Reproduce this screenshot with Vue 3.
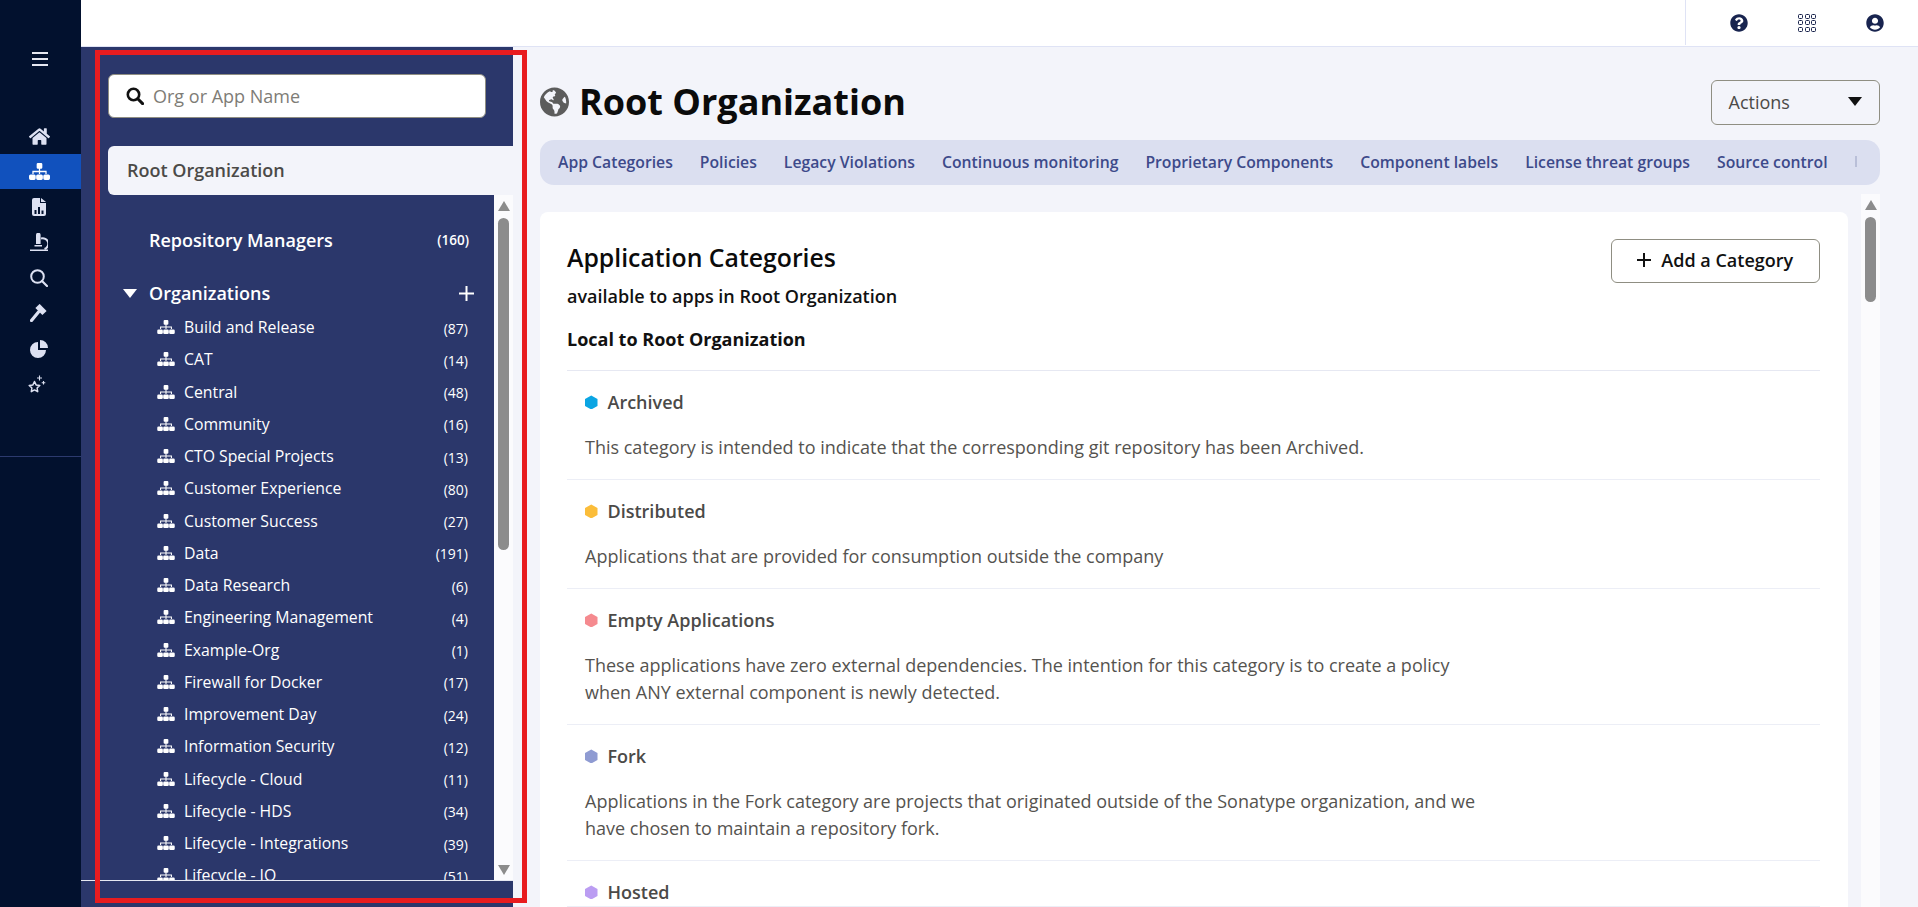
<script setup>
const railItems = ['home', 'org', 'report', 'scope', 'search', 'gavel', 'pie', 'stars']

const orgs = [
  ['Build and Release', 87], ['CAT', 14], ['Central', 48], ['Community', 16],
  ['CTO Special Projects', 13], ['Customer Experience', 80], ['Customer Success', 27],
  ['Data', 191], ['Data Research', 6], ['Engineering Management', 4], ['Example-Org', 1],
  ['Firewall for Docker', 17], ['Improvement Day', 24], ['Information Security', 12],
  ['Lifecycle - Cloud', 11], ['Lifecycle - HDS', 34], ['Lifecycle - Integrations', 39],
  ['Lifecycle - IQ', 51],
]

const tabs = [
  'App Categories', 'Policies', 'Legacy Violations', 'Continuous monitoring',
  'Proprietary Components', 'Component labels', 'License threat groups', 'Source control',
]

const categories = [
  { name: 'Archived', color: '#0ba5e3', desc: 'This category is intended to indicate that the corresponding git repository has been Archived.' },
  { name: 'Distributed', color: '#fbbd3a', desc: 'Applications that are provided for consumption outside the company' },
  { name: 'Empty Applications', color: '#f58a8f', desc: 'These applications have zero external dependencies. The intention for this category is to create a policy when ANY external component is newly detected.' },
  { name: 'Fork', color: '#8f9bd2', desc: 'Applications in the Fork category are projects that originated outside of the Sonatype organization, and we have chosen to maintain a repository fork.' },
  { name: 'Hosted', color: '#bb9df2', desc: '' },
]
</script>

<template>
  <div class="page">
    <nav class="rail">
      <div class="burger"><i /><i /><i /></div>
      <div v-for="item in railItems" :key="item" class="rail-item" :class="{ active: item === 'org' }">
        <svg v-if="item === 'home'" width="21" height="19" viewBox="0 0 576 512"><path d="M280.37 148.26L96 300.11V464a16 16 0 0 0 16 16l112.06-.29a16 16 0 0 0 15.92-16V368a16 16 0 0 1 16-16h64a16 16 0 0 1 16 16v95.64a16 16 0 0 0 16 16.05L464 480a16 16 0 0 0 16-16V300L295.67 148.26a12.19 12.19 0 0 0-15.3 0zM571.6 251.47L488 182.56V44.05a12 12 0 0 0-12-12h-56a12 12 0 0 0-12 12v72.61L318.47 43a48 48 0 0 0-61 0L4.34 251.47a12 12 0 0 0-1.6 16.9l25.5 31A12 12 0 0 0 45.15 301l235.22-193.74a12.19 12.19 0 0 1 15.3 0L530.9 301a12 12 0 0 0 16.9-1.6l25.5-31a12 12 0 0 0-1.7-16.93z" /></svg>
        <svg v-else-if="item === 'org'" width="21" height="17" viewBox="0 0 20 16"><path d="M8.5 0h3a1.2 1.2 0 0 1 1.200 1.200v3a1.200 1.200 0 0 1-1.200 1.200h-.9v2h6.200v3h-1.200V8.600h-5v1.800H9.400V8.600h-5v1.800H3.200V7.400h6.200v-2h-.9a1.200 1.200 0 0 1-1.200-1.200v-3A1.200 1.200 0 0 1 8.500 0zM1.500 10.800h3.400a1.500 1.500 0 0 1 1.500 1.500v2.200A1.500 1.500 0 0 1 4.900 16H1.500A1.500 1.500 0 0 1 0 14.500v-2.200a1.500 1.500 0 0 1 1.500-1.500zm6.800 0h3.400a1.500 1.500 0 0 1 1.500 1.500v2.200a1.500 1.500 0 0 1-1.500 1.500H8.300a1.500 1.500 0 0 1-1.500-1.500v-2.200a1.500 1.500 0 0 1 1.500-1.500zm6.800 0h3.400a1.500 1.500 0 0 1 1.500 1.500v2.200a1.500 1.500 0 0 1-1.500 1.500h-3.400a1.500 1.500 0 0 1-1.500-1.500v-2.200a1.500 1.500 0 0 1 1.500-1.500z" /></svg>
        <svg v-else-if="item === 'report'" width="14" height="18" viewBox="0 0 14 18"><path fill-rule="evenodd" d="M2 0h6v5h6v11a2 2 0 0 1-2 2H2a2 2 0 0 1-2-2V2a2 2 0 0 1 2-2zM2.500 12v4h2v-4zM6 9v7h2V9zM9.500 12.500V16h2v-3.500z" /><path d="M9 0l5 4H9z" /></svg>
        <svg v-else-if="item === 'scope'" width="18" height="18" viewBox="0 0 18 18"><path d="M6 2a2.300 2.300 0 0 1 4.600 0v9H6zM4.500 12h7.500v1.500H4.500zM0 16.500h18V18H0z" /><path d="M11 5.500a5.500 5.500 0 0 1 3.500 10.500" fill="none" stroke="#dde1f2" stroke-width="2" /></svg>
        <svg v-else-if="item === 'search'" width="18" height="18" viewBox="0 0 18 18"><circle cx="7.500" cy="7.500" r="6.300" fill="none" stroke="#dde1f2" stroke-width="2" /><path d="M12 12l5 5" stroke="#dde1f2" stroke-width="2.200" stroke-linecap="round" /></svg>
        <svg v-else-if="item === 'gavel'" width="18" height="18" viewBox="0 0 18 18"><path d="M9.600-.1l7 7-4.200 4.200-7-7z" /><path d="M8.500 8l-7 8.500" fill="none" stroke="#dde1f2" stroke-width="3.200" stroke-linecap="round" /></svg>
        <svg v-else-if="item === 'pie'" width="18" height="18" viewBox="0 0 18 18"><path d="M8 2a8 8 0 1 0 8 8H8zM10 0a8 8 0 0 1 8 8h-8z" /></svg>
        <svg v-else class="stars" width="18" height="18" viewBox="0 0 18 18"><path d="M6.500 6.500l1.600 3.400 3.700.5-2.700 2.600.6 3.700-3.200-1.800-3.200 1.800.6-3.700-2.700-2.600 3.700-.5z" fill="none" stroke="#dde1f2" stroke-width="1.500" stroke-linejoin="round" /><path d="M11.500 0.500v5M9 3h5M15.500 6v3.500M13.700 7.800h3.600" fill="none" stroke="#dde1f2" stroke-width="1.100" /></svg>
      </div>
      <div class="rail-line" />
    </nav>

    <div class="shell">
      <header class="topbar">
        <div class="top-icons">
          <svg width="18" height="18" viewBox="0 0 512 512"><path d="M504 256c0 136.997-111.043 248-248 248S8 392.997 8 256C8 119.083 119.043 8 256 8s248 111.083 248 248zM262.655 90c-54.497 0-89.255 22.957-116.549 63.758-3.536 5.286-2.353 12.415 2.715 16.258l34.699 26.31c5.205 3.947 12.621 3.008 16.665-2.122 17.864-22.658 30.113-35.797 57.303-35.797 20.429 0 45.698 13.148 45.698 32.958 0 14.976-12.363 22.667-32.534 33.976C247.128 238.528 216 254.941 216 296v4c0 6.627 5.373 12 12 12h56c6.627 0 12-5.373 12-12v-1.333c0-28.462 83.186-29.647 83.186-106.667 0-58.002-60.165-102-116.531-102zM256 338c-25.365 0-46 20.635-46 46 0 25.364 20.635 46 46 46s46-20.636 46-46c0-25.365-20.635-46-46-46z" /></svg>
          <div class="dots"><i v-for="n in 9" :key="n" /></div>
          <svg width="18" height="18" viewBox="0 0 496 512"><path d="M248 8C111 8 0 119 0 256s111 248 248 248 248-111 248-248S385 8 248 8zm0 96c48.600 0 88 39.400 88 88s-39.400 88-88 88-88-39.400-88-88 39.400-88 88-88zm0 344c-58.700 0-111.300-26.600-146.500-68.200 18.800-35.400 55.600-59.800 98.500-59.800 2.400 0 4.800.4 7.100 1.100 13 4.200 26.600 6.900 40.900 6.900 14.300 0 28-2.700 40.900-6.900 2.300-.7 4.700-1.100 7.100-1.100 42.900 0 79.700 24.400 98.500 59.800C359.300 421.400 306.700 448 248 448z" /></svg>
        </div>
      </header>

      <div class="body">
        <aside class="sidebar">
          <div class="search">
            <svg width="18" height="18" viewBox="0 0 18 18"><circle cx="7.500" cy="7.500" r="5.700" fill="none" stroke="#111" stroke-width="2.600" /><path d="M12 12l4.600 4.600" stroke="#111" stroke-width="3" stroke-linecap="round" /></svg>
            <span>Org or App Name</span>
          </div>
          <div class="root-tab">Root Organization</div>
          <div class="tree-wrap">
            <div class="tree">
              <div class="repo-row"><span>Repository Managers</span><em>(160)</em></div>
              <div class="orgs-head">
                <b class="caret" />
                <span>Organizations</span>
                <svg width="15" height="15" viewBox="0 0 15 15"><path d="M7.500 0v15M0 7.500h15" stroke="#fff" stroke-width="2" /></svg>
              </div>
              <div v-for="org in orgs" :key="org[0]" class="org-row">
                <svg width="18" height="14" viewBox="0 0 20 16"><path d="M8.500 0h3a1.200 1.200 0 0 1 1.200 1.200v3a1.200 1.200 0 0 1-1.200 1.200h-.9v2h6.200v3h-1.200V8.600h-5v1.800H9.400V8.600h-5v1.800H3.200V7.400h6.200v-2h-.9a1.200 1.200 0 0 1-1.200-1.200v-3A1.200 1.200 0 0 1 8.500 0zM1.500 10.800h3.400a1.500 1.500 0 0 1 1.500 1.500v2.200A1.500 1.500 0 0 1 4.900 16H1.500A1.500 1.500 0 0 1 0 14.500v-2.200a1.500 1.500 0 0 1 1.500-1.500zm6.800 0h3.400a1.500 1.500 0 0 1 1.500 1.500v2.200a1.500 1.500 0 0 1-1.500 1.500H8.300a1.500 1.500 0 0 1-1.500-1.500v-2.200a1.500 1.500 0 0 1 1.500-1.500zm6.800 0h3.400a1.500 1.500 0 0 1 1.500 1.500v2.200a1.500 1.500 0 0 1-1.500 1.500h-3.400a1.500 1.500 0 0 1-1.500-1.500v-2.200a1.500 1.500 0 0 1 1.500-1.500z" /></svg>
                <span>{{ org[0] }}</span>
                <em>({{ org[1] }})</em>
              </div>
            </div>
            <div class="scroll side-scroll">
              <b class="up" /><i /><b class="down" />
            </div>
          </div>
        </aside>

        <main class="main">
          <div class="title-row">
            <svg class="globe" width="29" height="30" viewBox="0 0 496 512"><path d="M248 8C111.030 8 0 119.030 0 256s111.030 248 248 248 248-111.030 248-248S384.970 8 248 8zm82.290 357.600c-3.900 3.880-7.990 7.950-11.310 11.280-2.990 3-5.100 6.700-6.170 10.710-1.510 5.660-2.730 11.380-4.770 16.870l-17.390 46.850c-13.760 3-28 4.690-42.650 4.690v-27.380c1.690-12.620-7.640-36.260-22.630-51.250-6-6-9.370-14.140-9.370-22.630v-32.010c0-11.640-6.270-22.340-16.460-27.970-14.370-7.950-34.810-19.060-48.810-26.110-11.480-5.780-22.100-13.140-31.650-21.750l-.8-.72a114.792 114.792 0 0 1-18.060-20.740c-9.380-13.770-24.660-36.420-34.590-51.140 20.470-45.500 57.360-82.040 103.200-101.890l24.010 12.010C203.480 89.740 216 82.010 216 70.110v-11.300c7.990-1.290 16.120-2.110 24.450-2.410l28.300 28.300c6.250 6.250 6.250 16.380 0 22.630L264 112l-10.340 10.340c-3.120 3.120-3.120 8.190 0 11.310l4.690 4.690c3.120 3.120 3.120 8.190 0 11.310l-8 8a8.008 8.008 0 0 1-5.660 2.340h-8.990c-2.080 0-4.080.81-5.580 2.270l-9.920 9.650a8.008 8.008 0 0 0-1.580 9.310l15.590 31.190c2.660 5.320-1.210 11.580-7.150 11.580h-5.640c-1.930 0-3.790-.7-5.240-1.960l-9.280-8.060a16.017 16.017 0 0 0-15.550-3.100l-31.170 10.390a11.950 11.950 0 0 0-8.170 11.340c0 4.530 2.560 8.660 6.610 10.690l11.080 5.540c9.410 4.710 19.790 7.160 30.310 7.160s22.590 27.290 32 32h66.750c8.490 0 16.620 3.370 22.630 9.370l13.690 13.690a30.503 30.503 0 0 1 8.930 21.570 46.536 46.536 0 0 1-13.720 32.980zM417 274.250c-5.790-1.450-10.840-5-14.150-9.970l-17.980-26.970a23.970 23.970 0 0 1 0-26.620l19.590-29.380c2.320-3.470 5.500-6.290 9.240-8.150l12.980-6.490C440.200 193.590 448 223.870 448 256c0 8.670-.74 17.160-1.820 25.540L417 274.250z" /></svg>
            <h1>Root Organization</h1>
            <button class="actions"><span>Actions</span><b class="caret dark" /></button>
          </div>

          <div class="tabs">
            <a v-for="tab in tabs" :key="tab">{{ tab }}</a>
            <i class="tab-sliver" />
          </div>

          <div class="content">
            <section class="card">
              <div class="card-head">
                <div>
                  <h2>Application Categories</h2>
                  <p class="sub">available to apps in Root Organization</p>
                </div>
                <button class="add">
                  <svg width="14" height="14" viewBox="0 0 14 14"><path d="M7 0v14M0 7h14" stroke="#111" stroke-width="2" /></svg>
                  Add a Category
                </button>
              </div>
              <h3>Local to Root Organization</h3>
              <ul class="cats">
                <li v-for="cat in categories" :key="cat.name">
                  <div class="cat-name"><i class="hex" :style="{ background: cat.color }" />{{ cat.name }}</div>
                  <p v-if="cat.desc">{{ cat.desc }}</p>
                </li>
              </ul>
            </section>
            <div class="scroll main-scroll">
              <b class="up" /><i />
            </div>
          </div>
        </main>
      </div>
    </div>

    <div class="redbox" />
  </div>
</template>

<style>
html, body { margin: 0; height: 100%; overflow: hidden; }
</style>

<style scoped>
* { box-sizing: border-box; }
.page {
  position: relative;
  display: flex;
  width: 1918px;
  height: 907px;
  overflow: hidden;
  font-family: 'Open Sans', 'Noto Sans', sans-serif;
  background: #f3f4fa;
}

.rail {
  width: 81px;
  flex: none;
  padding-top: 52px;
  background: #02112e;
}
.burger { display: flex; flex-direction: column; gap: 4px; width: 16px; margin: 0 0 52.500px 32px; }
.burger i { display: block; height: 2px; background: #e6e8f2; }
.rail-item {
  display: flex;
  align-items: center;
  justify-content: center;
  height: 35.4px;
  padding-right: 3px;
}
.rail-item svg { fill: #dde1f2; }
.rail-item.active { background: #1151bd; }
.rail-item.active svg { fill: #fff; }
.stars { margin-right: 4px; }
.rail-line { height: 1px; margin-top: 54px; background: #2c3a6e; }

.shell { flex: 1; display: flex; flex-direction: column; min-width: 0; }
.topbar {
  height: 47px;
  flex: none;
  display: flex;
  justify-content: flex-end;
  background: #fff;
  border-bottom: 1px solid #dfe3f5;
}
.top-icons {
  display: flex;
  align-items: center;
  gap: 50px;
  height: 45px;
  padding: 0 34px 0 44px;
  border-left: 1px solid #dfe3f5;
}
.top-icons svg { fill: #18244f; }
.dots { display: grid; grid-template-columns: repeat(3, 5px); gap: 1.500px; }
.dots i { height: 5px; border: 1.700px solid #141f48; border-radius: 1.500px; }

.body { flex: 1; display: flex; min-height: 0; }

.sidebar {
  width: 432px;
  flex: none;
  padding-top: 27px;
  display: flex;
  flex-direction: column;
  background: #2b376b;
}
.search {
  display: flex;
  align-items: center;
  gap: 9px;
  width: 378px;
  height: 44px;
  margin-left: 27px;
  padding-left: 17px;
  background: #fff;
  border: 1px solid #8f8e82;
  border-radius: 6px;
  font-size: 18px;
  color: #7e7c76;
}
.root-tab {
  height: 49px;
  margin: 28px 0 0 27px;
  padding-left: 19px;
  line-height: 49px;
  font-size: 18px;
  font-weight: 600;
  color: #4b4a48;
  background: #f3f4fa;
  border-radius: 6px 0 0 6px;
}
.tree-wrap { display: flex; height: 685px; border-bottom: 1px solid #e6e8f2; box-sizing: content-box; }
.tree { flex: 1; min-width: 0; overflow: hidden; padding: 31px 26px 0 0; color: #fff; }
.repo-row { display: flex; justify-content: space-between; align-items: center; height: 28px; padding-left: 68px; font-size: 18px; font-weight: 600; }
.repo-row em { font-style: normal; font-size: 13.500px; font-weight: 600; margin-right: -1px; }
.orgs-head { display: flex; align-items: center; height: 28px; margin-top: 25px; padding-left: 42px; font-size: 18px; font-weight: 600; }
.orgs-head span { flex: 1; margin-left: 12px; }
.orgs-head svg { margin-right: -6px; }
.org-row { display: flex; align-items: center; height: 32.25px; padding-left: 76px; font-size: 15.800px; }
.org-row svg { fill: #fff; flex: none; margin-right: 9px; }
.org-row span { flex: 1; }
.org-row em { font-style: normal; font-size: 14px; padding-top: 2px; }
.orgs-head + .org-row { margin-top: 4px; }

.caret { display: block; width: 0; height: 0; border-left: 7.5px solid transparent; border-right: 7.5px solid transparent; border-top: 9px solid #fff; }
.caret.dark { border-top-color: #111; }

.scroll { position: relative; flex: none; width: 19px; background: #fbfbfd; }
.scroll i { display: block; width: 11px; margin: 0 auto; background: #8c8c8c; border-radius: 6px; }
.scroll b { display: block; width: 0; margin: 0 auto; border-left: 6.500px solid transparent; border-right: 6.500px solid transparent; }
.scroll .up { border-bottom: 10px solid #8c8c8c; }
.scroll .down { border-top: 10px solid #8c8c8c; }
.side-scroll { padding-top: 6px; }
.side-scroll i { height: 332px; margin-top: 7px; margin-bottom: 315px; }
.main-scroll { padding-top: 6px; margin-left: 13px; }
.main-scroll i { height: 85px; margin-top: 7px; }

.main { flex: 1; min-width: 0; padding: 33px 38px 0 27px; }
.title-row { display: flex; align-items: center; height: 45px; }
.globe { fill: #5c5c5c; flex: none; margin-top: -1px; }
h1 { flex: 1; margin: 0 0 2px 10px; font-size: 36px; font-weight: 700; line-height: 45px; color: #0b0b0b; }
.actions {
  display: flex;
  align-items: center;
  justify-content: space-between;
  width: 169.500px;
  height: 45px;
  padding: 0 17px 2px;
  font: 400 18px 'Open Sans', sans-serif;
  color: #4b4a48;
  background: transparent;
  border: 1px solid #8f8e82;
  border-radius: 6px;
}
.tabs {
  position: relative;
  display: flex;
  align-items: center;
  gap: 27px;
  height: 45px;
  margin-top: 15px;
  padding: 0 0 2px 18px;
  background: #dbdff0;
  border-radius: 14px;
  font-size: 15.750px;
  font-weight: 600;
  color: #3d4a8a;
  white-space: nowrap;
}
.tab-sliver { width: 2px; height: 11px; background: #b9bfd8; }

.content { display: flex; height: 713px; margin-top: 9px; }
.card {
  width: 1308px;
  height: 695px;
  margin-top: 18px;
  padding: 27px 28px 0 27px;
  background: #fff;
  border-radius: 8px 8px 0 0;
  overflow: hidden;
}
.card-head { display: flex; justify-content: space-between; align-items: flex-start; }
h2 { margin: 1px 0 0; font-size: 24.800px; font-weight: 600; line-height: 34px; color: #0b0b0b; }
.sub { margin: 10px 0 0; font-size: 18px; font-weight: 600; line-height: 24px; color: #111; }
.add {
  display: flex;
  align-items: center;
  gap: 10px;
  width: 209.500px;
  height: 44px;
  padding-bottom: 3px;
  justify-content: center;
  font: 600 18px 'Open Sans', sans-serif;
  color: #111;
  background: #fff;
  border: 1px solid #8f8e82;
  border-radius: 6px;
}
h3 { margin: 19px 0 0; font-size: 18px; font-weight: 700; line-height: 24px; color: #111; }
.cats { list-style: none; margin: 19.400px 0 0; padding: 0; border-top: 1px solid #e6e8f2; }
.cats li { padding: 17px 18px 0; border-bottom: 1px solid #eceef6; }
.cat-name { display: flex; align-items: center; height: 28px; font-size: 18px; font-weight: 600; color: #4b4a48; }
.hex { width: 12.500px; height: 14px; margin-right: 10px; clip-path: polygon(50% 0, 100% 25%, 100% 75%, 50% 100%, 0 75%, 0 25%); }
.cats p { max-width: 915px; margin: 17.500px 0 0; padding-bottom: 18.500px; font-size: 18px; line-height: 27px; color: #55534f; }

.redbox {
  position: absolute;
  left: 95px;
  top: 50px;
  width: 432px;
  height: 853px;
  border: 5px solid #e81c1f;
  pointer-events: none;
}
</style>
